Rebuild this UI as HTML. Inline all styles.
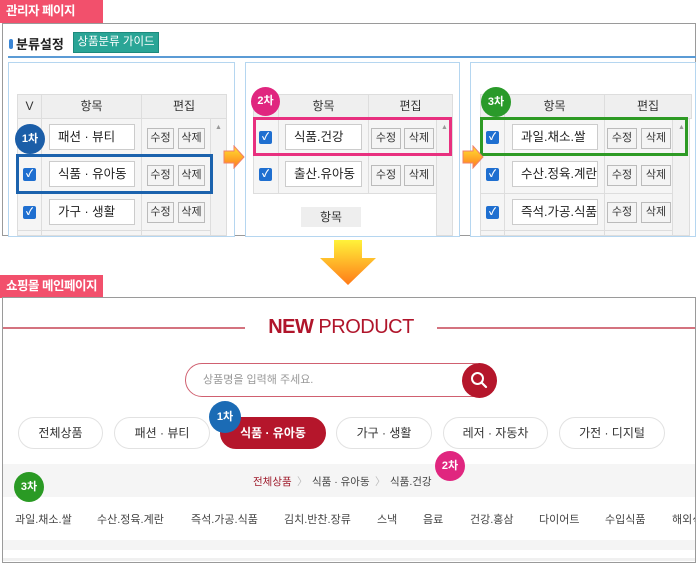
<!DOCTYPE html>
<html><head><meta charset="utf-8"><style>
*{box-sizing:border-box;margin:0;padding:0}
body{width:696px;height:563px;background:#fff;position:relative;overflow:hidden;font-family:"Liberation Sans","Noto Sans CJK KR",sans-serif;color:#333}
.a{position:absolute}
.lbl{background:#f2506c;color:#fff;font-weight:bold;font-size:12.5px;line-height:22px;padding-left:6px;width:103px;height:23px;white-space:nowrap;letter-spacing:-0.5px}
.box{border:1px solid #9a9a9a}
.panel{border:1px solid #b5d6f0;background:#fff}
.th{background:#efefef;border:1px solid #ddd;font-size:12px;text-align:center;line-height:23px;color:#333}
.cell{background:#f2f2f2;border:1px solid #ddd}
.inp{background:#fff;border:1px solid #ccc;font-size:12.5px;line-height:24px;padding-left:8px;color:#222;white-space:nowrap;overflow:hidden}
.btn{background:#f4f4f4;border:1px solid #bbb;font-size:11px;line-height:19px;text-align:center;color:#333}
.cb{width:13px;height:13px;background:#1f6fd0;border-radius:2px;color:#fff;font-size:10px;line-height:13px;text-align:center;font-weight:bold}
.badge{border-radius:50%;color:#fff;font-weight:bold;font-size:11px;text-align:center}
.pill{border:1px solid #e2e2e2;border-radius:17px;height:32px;line-height:30px;text-align:center;font-size:12px;color:#333;background:#fff}
.sub{font-size:11px;color:#444;white-space:nowrap}
.bc{font-size:10.5px;color:#444;white-space:nowrap;top:474px}
</style></head><body>

<div class="a lbl" style="left:0;top:0">관리자 페이지</div>
<div class="a box" style="left:2px;top:23px;width:694px;height:213px"></div>
<div class="a" style="left:9px;top:39px;width:4px;height:10px;border-radius:2px;background:#3a86d6"></div>
<div class="a" style="left:16px;top:34px;font-size:13px;font-weight:bold;color:#222">분류설정</div>
<div class="a" style="left:73px;top:32px;width:86px;height:21px;background:#2aa596;border:1px solid #1d8a7d;color:#fff;font-size:11.5px;line-height:19px;text-align:center">상품분류 가이드</div>
<div class="a" style="left:8px;top:56px;width:688px;height:2px;background:#5b9bd5"></div>

<!-- panel 1 -->
<div class="a panel" style="left:8px;top:62px;width:227px;height:175px"></div>
<div class="a th" style="left:17px;top:94px;width:25px;height:25px">V</div>
<div class="a th" style="left:41px;top:94px;width:101px;height:25px">항목</div>
<div class="a th" style="left:141px;top:94px;width:86px;height:25px">편집</div>
<div class="a cell" style="left:210px;top:118px;width:17px;height:118px"></div>
<div class="a" style="left:215px;top:124px;font-size:7px;color:#999">▲</div>
<div class="a cell" style="left:17px;top:118px;width:194px;height:118px;background:#f5f5f5"></div>
<div class="a" style="left:41px;top:118px;width:1px;height:118px;background:#ddd"></div>
<div class="a" style="left:141px;top:118px;width:1px;height:118px;background:#ddd"></div>
<div class="a" style="left:17px;top:155px;width:194px;height:1px;background:#ddd"></div>
<div class="a" style="left:17px;top:193px;width:194px;height:1px;background:#ddd"></div>
<div class="a" style="left:17px;top:230px;width:194px;height:1px;background:#ddd"></div>
<div class="a inp" style="left:49px;top:124px;width:86px;height:26px">패션 · 뷰티</div>
<div class="a inp" style="left:49px;top:161px;width:86px;height:26px">식품 · 유아동</div>
<div class="a inp" style="left:49px;top:199px;width:86px;height:26px">가구 · 생활</div>
<div class="a btn" style="left:147px;top:128px;width:27px;height:21px">수정</div>
<div class="a btn" style="left:178px;top:128px;width:27px;height:21px">삭제</div>
<div class="a btn" style="left:147px;top:165px;width:27px;height:21px">수정</div>
<div class="a btn" style="left:178px;top:165px;width:27px;height:21px">삭제</div>
<div class="a btn" style="left:147px;top:202px;width:27px;height:21px">수정</div>
<div class="a btn" style="left:178px;top:202px;width:27px;height:21px">삭제</div>
<div class="a cb" style="left:23px;top:168px">✓</div>
<div class="a cb" style="left:23px;top:206px">✓</div>
<div class="a" style="left:16px;top:154px;width:197px;height:40px;border:3px solid #1b62ad"></div>
<div class="a badge" style="left:15px;top:124px;width:30px;height:30px;line-height:30px;background:#1b5ea8">1차</div>

<!-- panel 2 -->
<div class="a panel" style="left:245px;top:62px;width:215px;height:175px"></div>
<div class="a th" style="left:253px;top:94px;width:26px;height:25px"></div>
<div class="a th" style="left:278px;top:94px;width:91px;height:25px">항목</div>
<div class="a th" style="left:368px;top:94px;width:85px;height:25px">편집</div>
<div class="a cell" style="left:436px;top:118px;width:17px;height:118px"></div>
<div class="a" style="left:441px;top:124px;font-size:7px;color:#999">▲</div>
<div class="a cell" style="left:253px;top:118px;width:184px;height:76px;background:#f5f5f5"></div>
<div class="a" style="left:278px;top:118px;width:1px;height:76px;background:#ddd"></div>
<div class="a" style="left:368px;top:118px;width:1px;height:76px;background:#ddd"></div>
<div class="a" style="left:253px;top:155px;width:184px;height:1px;background:#ddd"></div>
<div class="a inp" style="left:285px;top:124px;width:77px;height:26px">식품.건강</div>
<div class="a inp" style="left:285px;top:161px;width:77px;height:26px">출산.유아동</div>
<div class="a btn" style="left:371px;top:128px;width:30px;height:21px">수정</div>
<div class="a btn" style="left:404px;top:128px;width:30px;height:21px">삭제</div>
<div class="a btn" style="left:371px;top:165px;width:30px;height:21px">수정</div>
<div class="a btn" style="left:404px;top:165px;width:30px;height:21px">삭제</div>
<div class="a cb" style="left:259px;top:131px">✓</div>
<div class="a cb" style="left:259px;top:168px">✓</div>
<div class="a" style="left:253px;top:117px;width:199px;height:39px;border:3px solid #e8307f"></div>
<div class="a" style="left:301px;top:207px;width:60px;height:20px;background:#eee;font-size:12px;line-height:20px;text-align:center">항목</div>
<div class="a badge" style="left:251px;top:87px;width:29px;height:29px;line-height:29px;background:#e0267f">2차</div>

<!-- panel 3 -->
<div class="a panel" style="left:470px;top:62px;width:226px;height:175px"></div>
<div class="a th" style="left:480px;top:94px;width:25px;height:25px"></div>
<div class="a th" style="left:504px;top:94px;width:101px;height:25px">항목</div>
<div class="a th" style="left:604px;top:94px;width:88px;height:25px">편집</div>
<div class="a cell" style="left:672px;top:118px;width:18px;height:118px"></div>
<div class="a" style="left:678px;top:124px;font-size:7px;color:#999">▲</div>
<div class="a cell" style="left:480px;top:118px;width:193px;height:118px;background:#f5f5f5"></div>
<div class="a" style="left:504px;top:118px;width:1px;height:118px;background:#ddd"></div>
<div class="a" style="left:604px;top:118px;width:1px;height:118px;background:#ddd"></div>
<div class="a" style="left:480px;top:155px;width:193px;height:1px;background:#ddd"></div>
<div class="a" style="left:480px;top:193px;width:193px;height:1px;background:#ddd"></div>
<div class="a" style="left:480px;top:230px;width:193px;height:1px;background:#ddd"></div>
<div class="a inp" style="left:512px;top:124px;width:86px;height:26px">과일.채소.쌀</div>
<div class="a inp" style="left:512px;top:161px;width:86px;height:26px">수산.정육.계란</div>
<div class="a inp" style="left:512px;top:199px;width:86px;height:26px">즉석.가공.식품</div>
<div class="a btn" style="left:607px;top:128px;width:30px;height:21px">수정</div>
<div class="a btn" style="left:641px;top:128px;width:30px;height:21px">삭제</div>
<div class="a btn" style="left:607px;top:165px;width:30px;height:21px">수정</div>
<div class="a btn" style="left:641px;top:165px;width:30px;height:21px">삭제</div>
<div class="a btn" style="left:607px;top:202px;width:30px;height:21px">수정</div>
<div class="a btn" style="left:641px;top:202px;width:30px;height:21px">삭제</div>
<div class="a cb" style="left:486px;top:131px">✓</div>
<div class="a cb" style="left:486px;top:168px">✓</div>
<div class="a cb" style="left:486px;top:206px">✓</div>
<div class="a" style="left:480px;top:117px;width:208px;height:39px;border:3px solid #2d9a24"></div>
<div class="a badge" style="left:481px;top:87px;width:30px;height:30px;line-height:30px;background:#2a9a2a">3차</div>

<!-- arrows -->
<svg class="a" style="left:223px;top:145px" width="22" height="24"><defs><linearGradient id="g1" x1="0" y1="0" x2="0" y2="1"><stop offset="0" stop-color="#ffe330"/><stop offset="1" stop-color="#ff7a20"/></linearGradient></defs><path d="M1 6h10V1l10 11-10 11v-5H1z" fill="url(#g1)" stroke="#f0806a" stroke-width="1"/></svg>
<svg class="a" style="left:462px;top:145px" width="22" height="24"><path d="M1 6h10V1l10 11-10 11v-5H1z" fill="url(#g1)" stroke="#f0806a" stroke-width="1"/></svg>

<!-- down arrow -->
<svg class="a" style="left:318px;top:238px" width="60" height="50"><defs><linearGradient id="g2" x1="0" y1="0" x2="0" y2="1"><stop offset="0" stop-color="#fff23a"/><stop offset="1" stop-color="#ff7a18"/></linearGradient></defs><path d="M16 2h28v18h14L30 47 2 20h14z" fill="url(#g2)"/></svg>

<div class="a lbl" style="left:0;top:275px">쇼핑몰 메인페이지</div>
<div class="a box" style="left:2px;top:297px;width:694px;height:266px"></div>
<div class="a" style="left:3px;top:327px;width:242px;height:2px;background:#d4737f"></div>
<div class="a" style="left:437px;top:327px;width:258px;height:2px;background:#d4737f"></div>
<div class="a" style="left:245px;top:316px;width:192px;text-align:center;font-size:20px;color:#b0152b;letter-spacing:-0.5px"><b>NEW</b> PRODUCT</div>
<div class="a" style="left:185px;top:363px;width:305px;height:34px;border:1px solid #d06070;border-radius:17px;font-size:11px;color:#999;line-height:32px;padding-left:17px">상품명을 입력해 주세요.</div>
<div class="a" style="left:462px;top:363px;width:35px;height:35px;border-radius:50%;background:#b5162b"></div>
<svg class="a" style="left:469px;top:370px" width="20" height="20"><circle cx="8.5" cy="8.5" r="5.5" fill="none" stroke="#fff" stroke-width="2"/><path d="M12.5 12.5l4.5 4.5" stroke="#fff" stroke-width="2.2" stroke-linecap="round"/></svg>

<div class="a pill" style="left:18px;top:417px;width:85px">전체상품</div>
<div class="a pill" style="left:114px;top:417px;width:96px">패션 · 뷰티</div>
<div class="a pill" style="left:220px;top:417px;width:106px;background:#b5162b;border-color:#b5162b;color:#fff;font-weight:bold">식품 · 유아동</div>
<div class="a pill" style="left:336px;top:417px;width:96px">가구 · 생활</div>
<div class="a pill" style="left:443px;top:417px;width:105px">레저 · 자동차</div>
<div class="a pill" style="left:559px;top:417px;width:106px">가전 · 디지털</div>
<div class="a badge" style="left:209px;top:401px;width:32px;height:32px;line-height:32px;background:#1b6bb5">1차</div>

<div class="a" style="left:3px;top:464px;width:692px;height:33px;background:#f5f5f5"></div>
<div class="a bc" style="left:253px;color:#a01e2e">전체상품</div>
<div class="a bc" style="left:297px;color:#bbb">〉</div>
<div class="a bc" style="left:312px">식품 · 유아동</div>
<div class="a bc" style="left:375px;color:#bbb">〉</div>
<div class="a bc" style="left:390px">식품.건강</div>
<div class="a badge" style="left:435px;top:451px;width:30px;height:30px;line-height:30px;background:#e0267f">2차</div>
<div class="a badge" style="left:14px;top:472px;width:30px;height:30px;line-height:30px;background:#2a9a24">3차</div>

<div class="a sub" style="left:15px;top:511px">과일.채소.쌀</div>
<div class="a sub" style="left:97px;top:511px">수산.정육.계란</div>
<div class="a sub" style="left:191px;top:511px">즉석.가공.식품</div>
<div class="a sub" style="left:284px;top:511px">김치.반찬.장류</div>
<div class="a sub" style="left:377px;top:511px">스낵</div>
<div class="a sub" style="left:423px;top:511px">음료</div>
<div class="a sub" style="left:470px;top:511px">건강.홍삼</div>
<div class="a sub" style="left:539px;top:511px">다이어트</div>
<div class="a sub" style="left:605px;top:511px">수입식품</div>
<div class="a sub" style="left:672px;top:511px;overflow:hidden;width:23px">해외식품</div>

<div class="a" style="left:3px;top:540px;width:692px;height:10px;background:#f4f4f4"></div>
<div class="a" style="left:3px;top:558px;width:692px;height:3px;background:#f0f0f0"></div>
</body></html>
